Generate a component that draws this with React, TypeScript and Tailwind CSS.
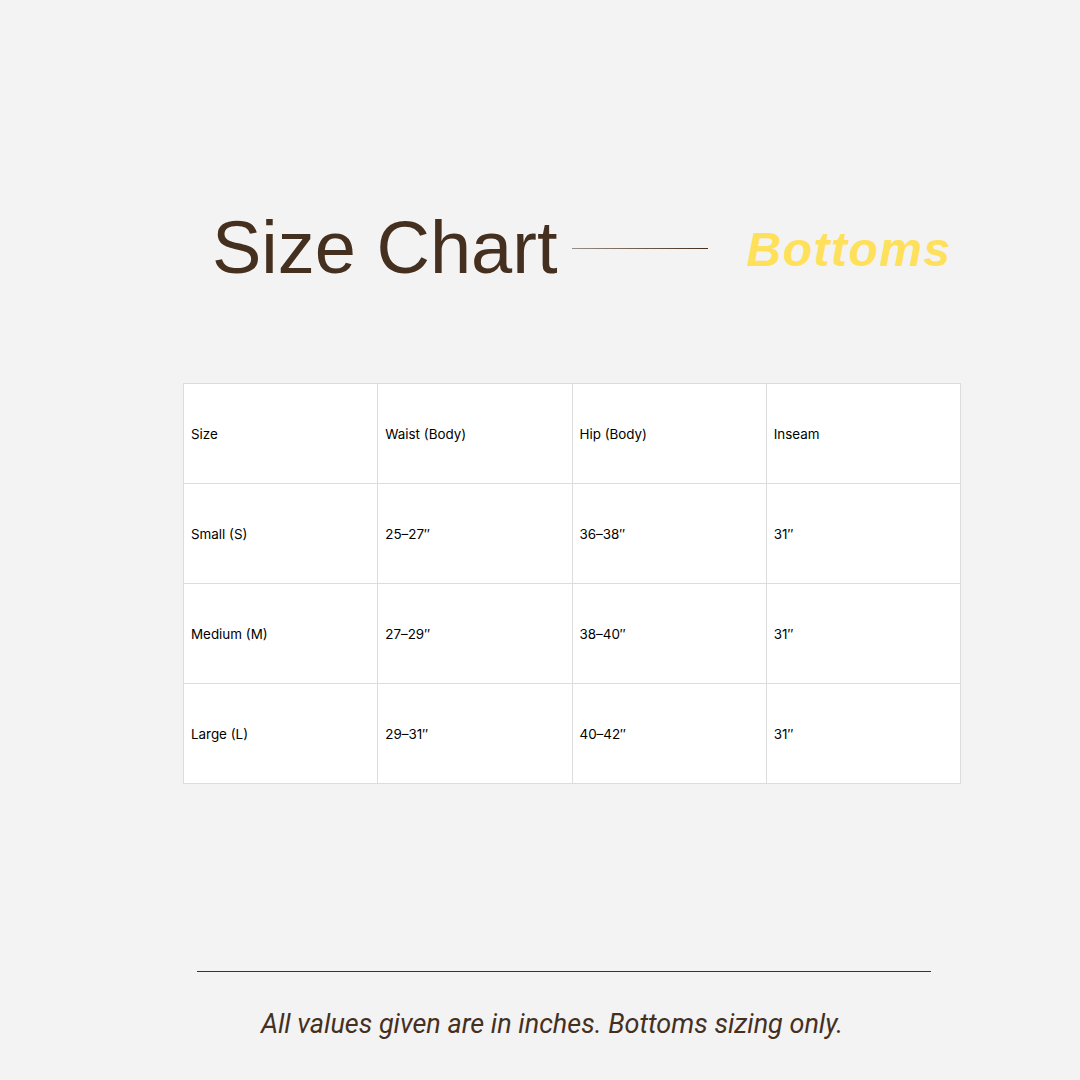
export default function App() {
  const rows = [
    ['Size', 'Waist (Body)', 'Hip (Body)', 'Inseam'],
    ['Small (S)', '25–27″', '36–38″', '31″'],
    ['Medium (M)', '27–29″', '38–40″', '31″'],
    ['Large (L)', '29–31″', '40–42″', '31″'],
  ];

  return (
    <div className="w-[1080px] h-[1080px] bg-[#f3f3f3] flex flex-col overflow-hidden">
      {/* heading */}
      <div className="mt-[208px] pl-[212px] flex items-center h-[80px]">
        <h1 className="text-[74px] leading-none text-[#45301f] font-['Liberation_Sans',sans-serif]">
          Size Chart
        </h1>
        <div className="ml-[15px] w-[136px] h-px bg-gradient-to-r from-[#9a8f86] to-[#45301f]" />
        <span className="ml-[38px] mt-[4px] text-[48px] leading-none font-bold italic text-[#ffe05a] font-['Liberation_Sans',sans-serif] tracking-[1.5px]">
          Bottoms
        </span>
      </div>

      {/* table */}
      <table className="mt-[95px] ml-[183px] w-[778px] border-collapse bg-white table-fixed font-['Inter',sans-serif] text-[13.4px] text-black">
        <tbody>
          {rows.map((row, i) => (
            <tr key={i} className="h-[100px]">
              {row.map((cell, j) => (
                <td key={j} className="border border-[#dcdcdc] px-[7px] pt-[2px] align-middle">
                  {cell}
                </td>
              ))}
            </tr>
          ))}
        </tbody>
      </table>

      {/* footer */}
      <div className="mt-auto mb-[36px] flex flex-col">
        <div className="ml-[197px] w-[734px] h-px bg-[#45301f]" />
        <p className="mt-[32px] text-center pl-[24px] text-[27px] italic text-[#45301f] font-['Roboto',sans-serif]">
          All values given are in inches. Bottoms sizing only.
        </p>
      </div>
    </div>
  );
}
